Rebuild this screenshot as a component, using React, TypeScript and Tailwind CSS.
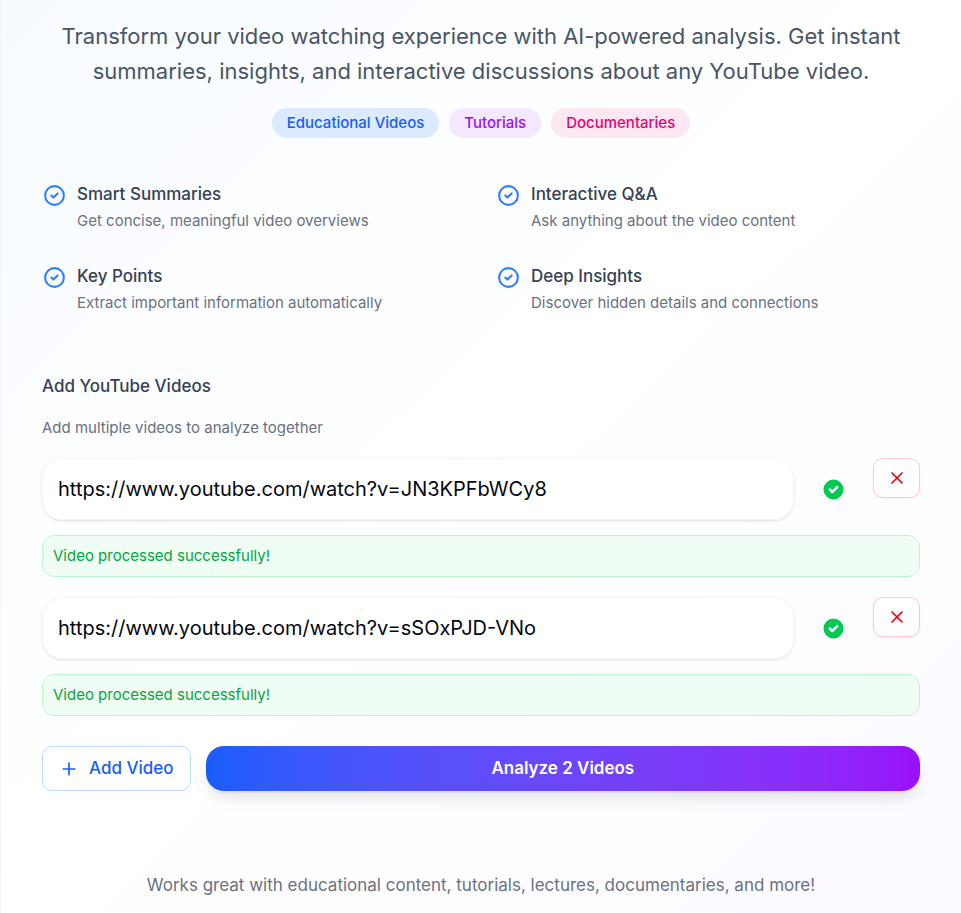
import { useState } from 'react'
import { Plus, X } from 'lucide-react'
import { HiCheckCircle, HiOutlineCheckCircle } from 'react-icons/hi'

interface FeatureProps {
  title: string
  description: string
}

interface VideoRowProps {
  id: number
  url: string
  onChange: (url: string) => void
  onRemove: () => void
}

interface Video {
  id: number
  url: string
}

const features: FeatureProps[] = [
  { title: 'Smart Summaries', description: 'Get concise, meaningful video overviews' },
  { title: 'Interactive Q&A', description: 'Ask anything about the video content' },
  { title: 'Key Points', description: 'Extract important information automatically' },
  { title: 'Deep Insights', description: 'Discover hidden details and connections' },
]

const tags = [
  { label: 'Educational Videos', style: 'bg-blue-100 text-blue-600' },
  { label: 'Tutorials', style: 'bg-purple-100 text-purple-600' },
  { label: 'Documentaries', style: 'bg-pink-100 text-pink-600' },
]

function Feature({ title, description }: FeatureProps) {
  return (
    <li className="flex items-start gap-[10px]">
      <HiOutlineCheckCircle className="mt-px size-[25px] shrink-0 text-blue-500" />
      <div>
        <h3 className="text-[17px] leading-[25px] font-medium text-gray-700">{title}</h3>
        <p className="mt-1 text-[15px] leading-5 text-gray-500">{description}</p>
      </div>
    </li>
  )
}

function VideoRow({ id, url, onChange, onRemove }: VideoRowProps) {
  return (
    <div className="flex flex-col gap-[15px]">
      <div className="flex items-start gap-[15px]">
        <input
          type="url"
          aria-label={`YouTube URL ${id}`}
          value={url}
          onChange={(e) => onChange(e.target.value)}
          className="h-[62px] min-w-0 flex-1 rounded-[20px] border border-gray-100/70 bg-white/80 px-[15px] text-xl text-gray-950 shadow-sm outline-none"
        />
        <div className="flex self-stretch items-center px-3">
          <HiCheckCircle className="size-[25px] text-green-500" />
        </div>
        <button
          type="button"
          aria-label="Remove video"
          onClick={onRemove}
          className="flex h-10 w-[47px] items-center justify-center rounded-[10px] border border-red-200 bg-white text-red-600 shadow-xs"
        >
          <X className="size-5" />
        </button>
      </div>
      <p className="rounded-xl border border-green-200 bg-green-50 p-[10px] text-[15px] leading-5 text-green-600">
        Video processed successfully!
      </p>
    </div>
  )
}

export default function App() {
  const [videos, setVideos] = useState<Video[]>([
    { id: 1, url: 'https://www.youtube.com/watch?v=JN3KPFbWCy8' },
    { id: 2, url: 'https://www.youtube.com/watch?v=sSOxPJD-VNo' },
  ])

  const updateVideo = (id: number, url: string) =>
    setVideos(videos.map((v) => (v.id === id ? { id, url } : v)))

  return (
    <main className="min-h-screen border-l border-slate-100 bg-linear-to-br from-[#f7fbff] via-white to-[#fcfaff] px-[41px] pt-[19px] pb-3 font-['Inter',sans-serif]">
      <p className="text-center text-[22px] leading-[35px] text-gray-600">
        Transform your video watching experience with AI-powered analysis. Get instant summaries,
        insights, and interactive discussions about any YouTube video.
      </p>

      <div className="mt-[19px] flex flex-wrap justify-center gap-[10px]">
        {tags.map((tag) => (
          <span
            key={tag.label}
            className={`rounded-full px-[15px] py-[5px] text-[15px] leading-5 font-medium ${tag.style}`}
          >
            {tag.label}
          </span>
        ))}
      </div>

      <ul className="mt-11 grid grid-cols-2 gap-x-[30px] gap-y-[33px]">
        {features.map((feature) => (
          <Feature key={feature.title} {...feature} />
        ))}
      </ul>

      <form className="mt-[61px]" onSubmit={(e) => e.preventDefault()}>
        <h2 className="text-[17px] leading-[25px] font-medium text-gray-700">Add YouTube Videos</h2>
        <p className="mt-[19px] text-[15px] leading-5 text-gray-500">Add multiple videos to analyze together</p>

        <div className="mt-5 flex flex-col gap-5">
          {videos.map((video) => (
            <VideoRow
              key={video.id}
              id={video.id}
              url={video.url}
              onChange={(url) => updateVideo(video.id, url)}
              onRemove={() => setVideos(videos.filter((v) => v.id !== video.id))}
            />
          ))}
        </div>

        <div className="mt-[30px] flex gap-[15px]">
          <button
            type="button"
            onClick={() => setVideos([...videos, { id: Date.now(), url: '' }])}
            className="flex h-[45px] items-center gap-[10px] rounded-[10px] border border-blue-200 bg-white px-4 text-[17px] font-medium text-blue-600"
          >
            <Plus className="size-5" />
            Add Video
          </button>
          <button
            type="submit"
            className="h-[45px] flex-1 rounded-[18px] bg-linear-to-r from-blue-600 to-purple-600 text-[17px] font-semibold text-white shadow-lg"
          >
            Analyze {videos.length} Videos
          </button>
        </div>
      </form>

      <p className="mt-[82px] text-center text-[17px] leading-[25px] text-gray-500">
        Works great with educational content, tutorials, lectures, documentaries, and more!
      </p>
    </main>
  )
}
